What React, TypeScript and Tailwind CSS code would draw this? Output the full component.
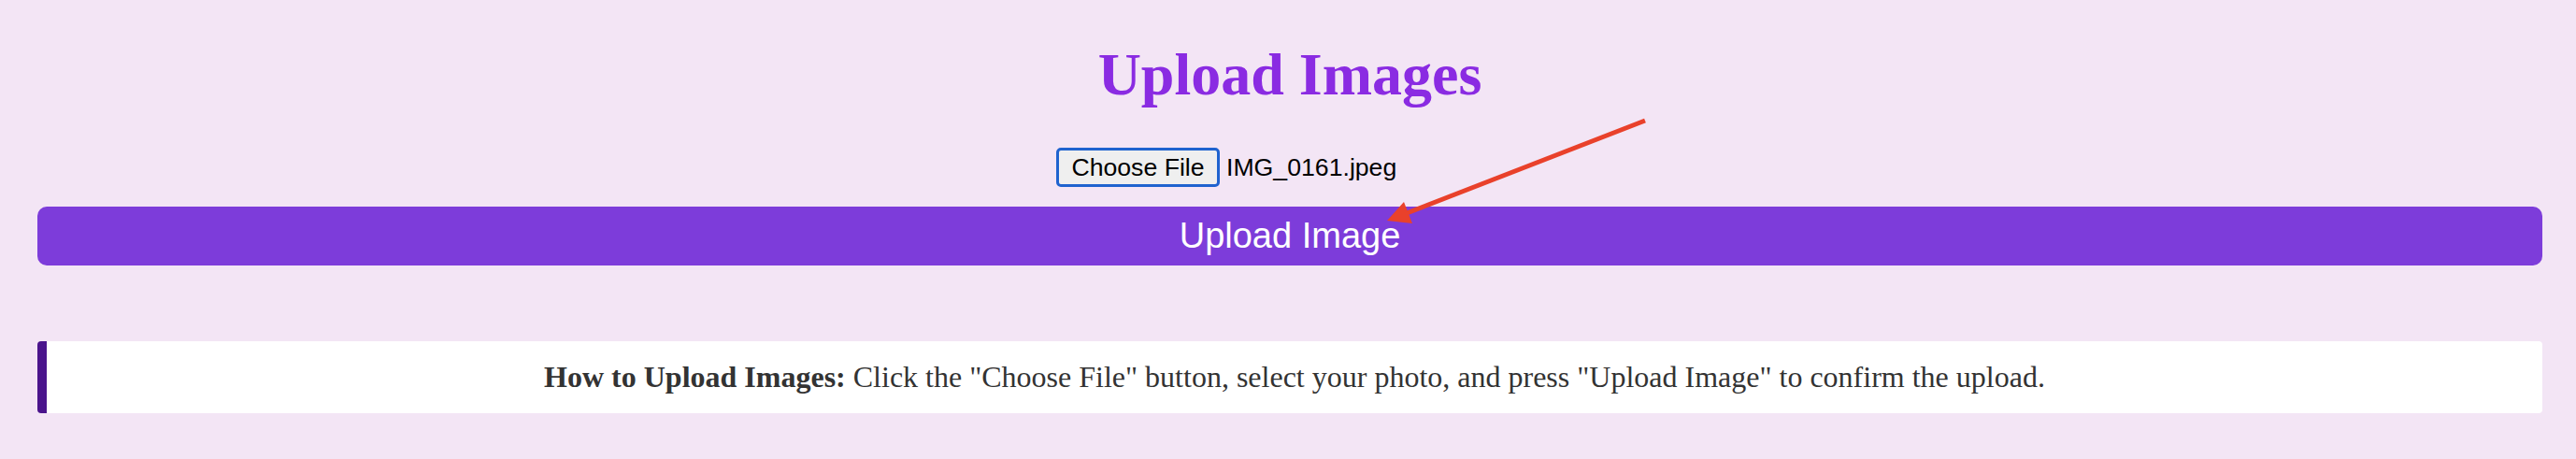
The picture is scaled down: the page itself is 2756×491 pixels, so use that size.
type UploadButtonProps = {
  label: string;
};

function FakeFileInput({ fileName }: { fileName: string }) {
  return (
    <div className="mx-auto flex h-[42px] w-[500px] items-center font-['Liberation_Sans',Arial,sans-serif] text-[26.67px] text-black">
      <button
        type="button"
        className="flex h-[42px] w-[175px] items-center justify-center rounded-[5px] border-[3px] border-[#1f63cf] bg-[#efefef]"
      >
        Choose File
      </button>
      <span className="ml-[7px]">{fileName}</span>
    </div>
  );
}

function UploadButton({ label }: UploadButtonProps) {
  return (
    <button
      type="button"
      className="mt-[21px] flex h-[63px] w-full items-center justify-center rounded-[10px] bg-[#7d3cda] font-['Liberation_Sans',Arial,sans-serif] text-[38px] text-white"
    >
      {label}
    </button>
  );
}

export default function App() {
  return (
    <div className="relative min-h-screen bg-[#f3e5f5] pl-10 pr-9 pt-[43px] font-['Liberation_Serif','Times_New_Roman',serif]">
      <h1 className="text-center text-[64px] font-bold leading-[74px] text-[#8a2be2]">
        Upload Images
      </h1>

      <div className="mt-[41px]">
        <FakeFileInput fileName="IMG_0161.jpeg" />
      </div>

      <UploadButton label="Upload Image" />

      <div className="mt-[81px] rounded-[4px] border-l-[10px] border-[#4a148c] bg-white px-5 py-5 text-center text-[32px] leading-[37px] text-[#333]">
        <strong className="font-bold">How to Upload Images:</strong> Click the
        "Choose File" button, select your photo, and press "Upload Image" to
        confirm the upload.
      </div>

      {/* annotation arrow */}
      <svg
        className="pointer-events-none absolute left-0 top-0"
        width="2756"
        height="491"
        aria-hidden="true"
      >
        <line
          x1="1760"
          y1="129"
          x2="1500"
          y2="230"
          stroke="#e9412b"
          strokeWidth="5"
        />
        <polygon points="1484,236 1502,216 1511,239" fill="#e9412b" />
      </svg>
    </div>
  );
}
